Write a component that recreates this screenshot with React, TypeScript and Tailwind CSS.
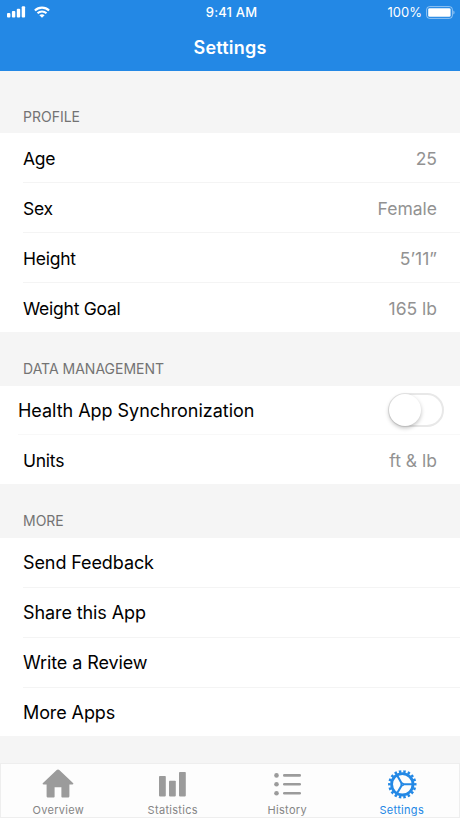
import React from "react";

type Item = { label: string; value?: string };

const profile: Item[] = [
  { label: "Age", value: "25" },
  { label: "Sex", value: "Female" },
  { label: "Height", value: "5’11”" },
  { label: "Weight Goal", value: "165 lb" },
];

const more: Item[] = [
  { label: "Send Feedback" },
  { label: "Share this App" },
  { label: "Write a Review" },
  { label: "More Apps" },
];

const SignalIcon = () => (
  <svg width="19" height="12" viewBox="0 0 19 12" fill="white">
    <rect x="0" y="7" width="3.4" height="4.6" rx="1" />
    <rect x="4.9" y="5" width="3.4" height="6.6" rx="1" />
    <rect x="9.8" y="2.8" width="3.4" height="8.8" rx="1" />
    <rect x="14.7" y="0.2" width="3.4" height="11.4" rx="1" />
  </svg>
);

const WifiIcon = () => (
  <svg width="16" height="12" viewBox="0 0 16 12" fill="none" stroke="white" strokeWidth="2.1">
    <path d="M.9 4.5C4.8.6 11.2.6 15.1 4.5" />
    <path d="M3.5 7.3c2.5-2.4 6.5-2.4 9 0" />
    <path d="M8 11.8 5.4 9.2c1.4-1.3 3.8-1.3 5.2 0Z" fill="white" stroke="none" />
  </svg>
);

const BatteryIcon = () => (
  <svg width="29" height="13" viewBox="0 0 29 13" fill="none">
    <rect x="0.6" y="0.6" width="25.8" height="11.8" rx="3" stroke="white" strokeOpacity="0.5" />
    <rect x="2.2" y="2.2" width="22.4" height="8.6" rx="1.4" fill="white" />
    <path d="M27.4 4.5c1.5.6 1.5 3.4 0 4Z" fill="white" fillOpacity="0.55" />
  </svg>
);

const HomeIcon = () => (
  <svg width="32" height="30" viewBox="0 0 32 30" fill="#9b9b9b">
    <path d="M16 .5c.5 0 .9.2 1.3.6L31 14c.7.7.4 1.5-.6 1.5h-3V27c0 1-.6 1.6-1.6 1.6h-5.2c-.8 0-1.2-.5-1.2-1.2v-9.2h-6.8v9.2c0 .7-.4 1.2-1.2 1.2H6.2c-1 0-1.6-.6-1.6-1.6V15.5h-3C.6 15.5.3 14.7 1 14L14.7 1.1c.4-.4.8-.6 1.3-.6Z" />
  </svg>
);

const BarsIcon = () => (
  <svg width="32" height="30" viewBox="0 0 32 30" fill="#9b9b9b">
    <rect x="2" y="7" width="6.8" height="20.4" rx="0.8" />
    <rect x="12" y="11.7" width="6.8" height="15.7" rx="0.8" />
    <rect x="22" y="3" width="6.8" height="24.4" rx="0.8" />
  </svg>
);

const ListIcon = () => (
  <svg width="32" height="30" viewBox="0 0 32 30" fill="#9b9b9b">
    <circle cx="5.5" cy="6.4" r="2.3" />
    <circle cx="5.5" cy="15.3" r="2.3" />
    <circle cx="5.5" cy="24.2" r="2.3" />
    <rect x="12" y="5.1" width="18" height="2.6" rx="1.3" />
    <rect x="12" y="14" width="18" height="2.6" rx="1.3" />
    <rect x="12" y="22.9" width="18" height="2.6" rx="1.3" />
  </svg>
);

const GearIcon = () => (
  <svg width="32" height="30" viewBox="0 0 32 30" fill="none" stroke="#2388e5">
    <circle cx="16.3" cy="15.3" r="10.7" strokeWidth="2.8" />
    <circle cx="16.3" cy="15.3" r="12.9" strokeWidth="2.6" pathLength="36" strokeDasharray="1.1 0.9" strokeDashoffset="0.55" />
    <path d="M17 15.3H26.5M15.9 14.7 11.2 6.5M15.9 15.9 11.2 24.1" strokeWidth="2.1" />
    <circle cx="16.3" cy="15.3" r="1.1" strokeWidth="1.6" />
  </svg>
);

const tabs = [
  { name: "Overview", icon: <HomeIcon /> },
  { name: "Statistics", icon: <BarsIcon /> },
  { name: "History", icon: <ListIcon /> },
  { name: "Settings", icon: <GearIcon />, active: true },
];

const SectionTitle = ({ children }: { children: React.ReactNode }) => (
  <h2 className="h-[54px] pt-[27px] pl-[23px] text-[14px] leading-5 text-[#737373]">{children}</h2>
);

const Row = ({ label, value }: Item) => (
  <li className="h-[50px] pl-[23px] group">
    <div
      className={`h-full flex items-center justify-between pr-[23px] border-b border-[#f4f4f4] group-last:border-transparent ${value ? "pt-[3px]" : ""}`}
    >
      <span className={value ? "text-[17.5px] tracking-[-0.25px]" : "tracking-[-0.1px]"}>{label}</span>
      {value && <span className="text-[#929292] text-[17.5px]">{value}</span>}
    </div>
  </li>
);

const App = () => {
  return (
    <div className="w-[460px] h-[818px] flex flex-col overflow-hidden bg-[#f5f5f5] text-black font-['Inter',sans-serif]">
      <header className="h-[71px] shrink-0 bg-[#2388e5] text-white">
        <div className="h-6 grid grid-cols-3 items-center pl-[7px] pr-[5px] text-[13px]">
          <div className="flex items-center gap-2">
            <SignalIcon />
            <WifiIcon />
          </div>
          <span className="pt-px pl-px text-center font-medium tracking-[0.15px]">9:41 AM</span>
          <div className="flex items-center justify-end gap-1">
            <span className="pt-px">100%</span>
            <BatteryIcon />
          </div>
        </div>
        <h1 className="h-[46px] flex items-center justify-center text-[18px] font-semibold tracking-[0.2px]">Settings</h1>
      </header>

      <main className="flex-1 pt-2 text-[18px]">
        <div className="pt-px -mb-px">
          <SectionTitle>PROFILE</SectionTitle>
        </div>
        <ul className="bg-white h-[199px]">
          {profile.map((item) => (
            <Row key={item.label} {...item} />
          ))}
        </ul>

        <SectionTitle>DATA MANAGEMENT</SectionTitle>
        <ul className="bg-white h-[98px]">
          <li className="h-[49px] pl-[18px]">
            <div className="h-full pr-4 flex items-center justify-between border-b border-[#f8f8f8]">
              <span className="tracking-[-0.03px]">Health App Synchronization</span>
              <button
                role="switch"
                aria-checked="false"
                className="w-14 h-[34px] rounded-full border-2 border-[#e8e8e8] bg-white flex items-center"
              >
                <span className="size-8 -ml-px shrink-0 rounded-full bg-white shadow-[0_2px_4px_rgba(0,0,0,0.25)]" />
              </button>
            </div>
          </li>
          <Row label="Units" value="ft &amp; lb" />
        </ul>

        <SectionTitle>MORE</SectionTitle>
        <ul className="bg-white h-[198px]">
          {more.map((item) => (
            <Row key={item.label} {...item} />
          ))}
        </ul>
      </main>

      <nav className="h-[55px] shrink-0 grid grid-cols-4 bg-[#fdfdfd] border border-[#eeeeee] pt-[5px]">
        {tabs.map(({ name, icon, active }) => (
          <a
            key={name}
            className={`flex flex-col items-center text-[11px] leading-4 tracking-[0.3px] ${active ? "text-[#2388e5]" : "text-[#858585]"}`}
          >
            {icon}
            <span className="mt-[3px]">{name}</span>
          </a>
        ))}
      </nav>
    </div>
  );
};

export default App;
